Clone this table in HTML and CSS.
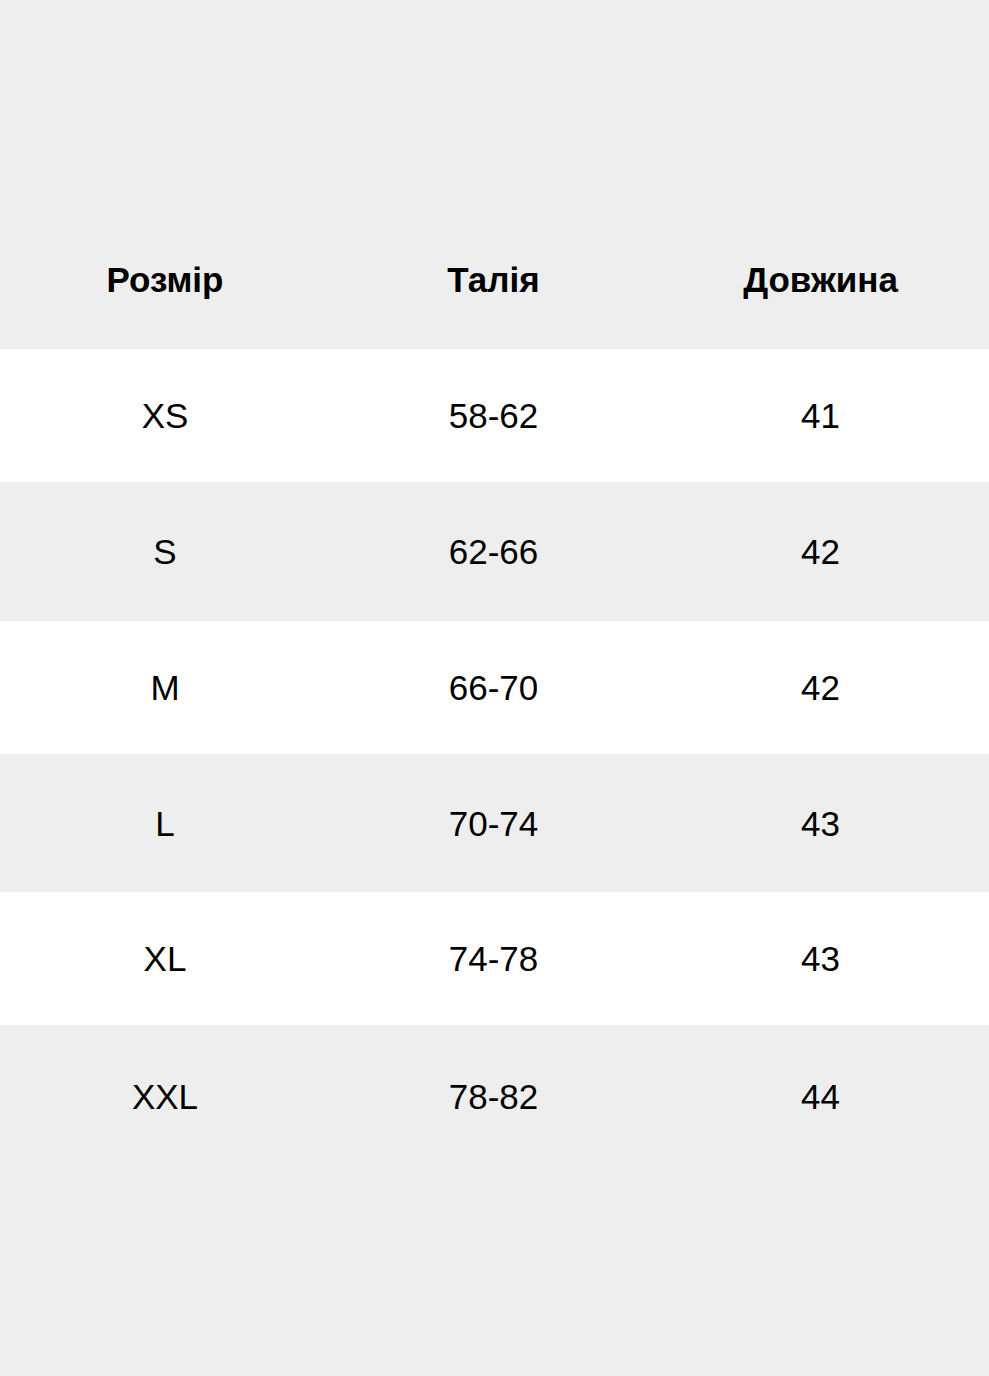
FILE: index.html
```html
<!DOCTYPE html>
<html lang="uk">
<head>
<meta charset="utf-8">
<title>Таблиця розмірів</title>
<link rel="stylesheet" href="styles.css">
</head>
<body>
<main class="page">
  <div class="table">
    <div class="row head h140">
      <div class="cell">Розмір</div>
      <div class="cell">Талія</div>
      <div class="cell">Довжина</div>
    </div>
    <div class="row light h133">
      <div class="cell">XS</div>
      <div class="cell">58-62</div>
      <div class="cell">41</div>
    </div>
    <div class="row gray h139">
      <div class="cell">S</div>
      <div class="cell">62-66</div>
      <div class="cell">42</div>
    </div>
    <div class="row light h133">
      <div class="cell">M</div>
      <div class="cell">66-70</div>
      <div class="cell">42</div>
    </div>
    <div class="row gray h138">
      <div class="cell">L</div>
      <div class="cell">70-74</div>
      <div class="cell">43</div>
    </div>
    <div class="row light h133">
      <div class="cell">XL</div>
      <div class="cell">74-78</div>
      <div class="cell">43</div>
    </div>
    <div class="row gray h142">
      <div class="cell">XXL</div>
      <div class="cell">78-82</div>
      <div class="cell">44</div>
    </div>
  </div>
</main>
</body>
</html>
```

FILE: styles.css
```css
html, body {
  margin: 0;
  padding: 0;
}
body {
  background: #efefef;
  font-family: "Liberation Sans", Arial, sans-serif;
  color: #000;
}
.page {
  width: 989px;
  height: 1376px;
  padding-top: 209px;
  box-sizing: border-box;
}
.table {
  display: flex;
  flex-direction: column;
}
.row {
  display: grid;
  grid-template-columns: 330px 1fr 1fr;
  padding-right: 5px;
  align-items: center;
}
.cell {
  text-align: center;
  font-size: 35px;
  line-height: 1;
}
.head {
  background: #eeeeee;
}
.head .cell {
  font-weight: bold;
}
.light {
  background: #ffffff;
}
.gray {
  background: #eeeeee;
}
.h133 { height: 133px; }
.h138 { height: 138px; }
.h139 { height: 139px; }
.h140 { height: 140px; }
.h142 { height: 142px; }
```
